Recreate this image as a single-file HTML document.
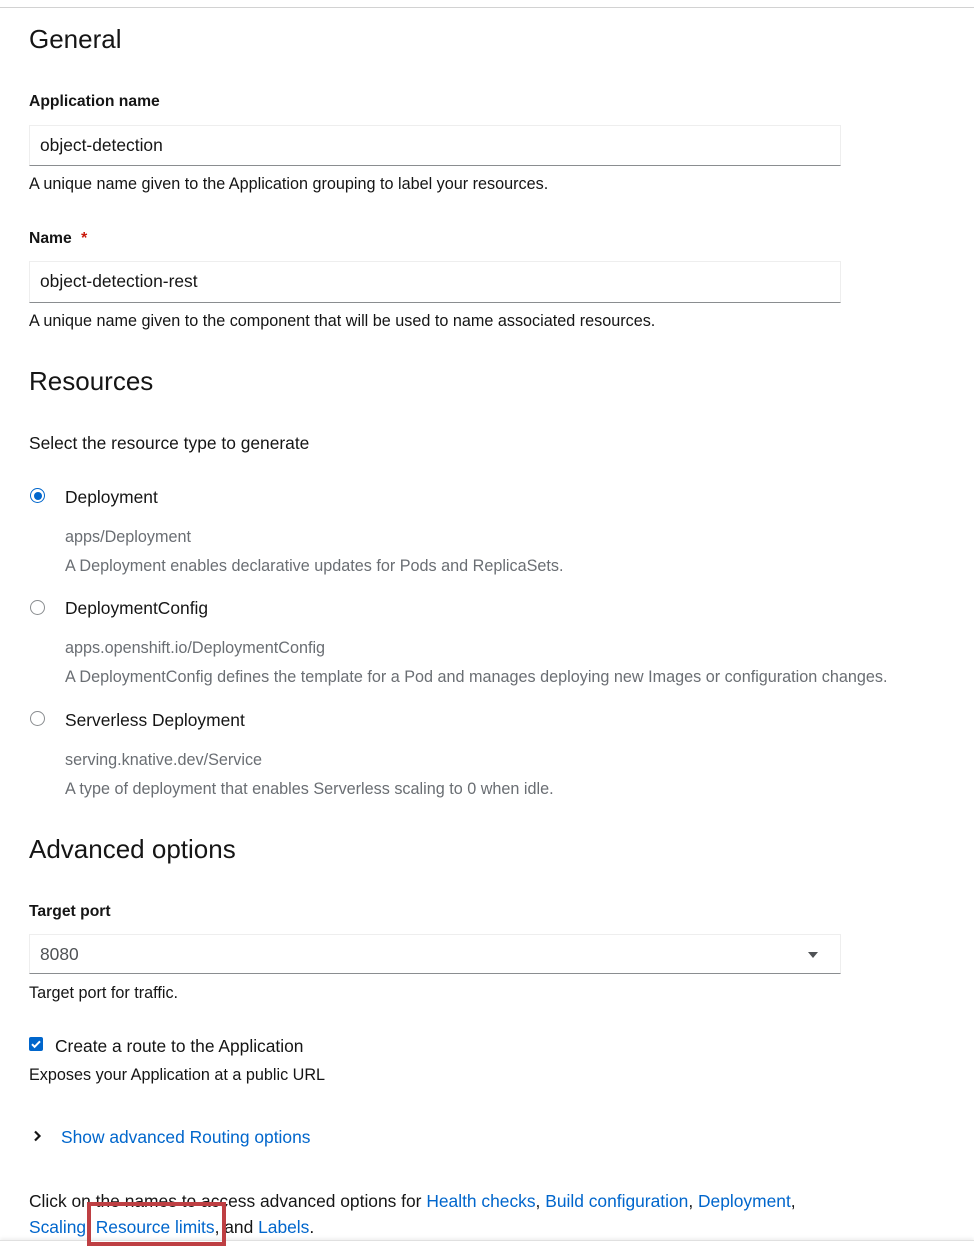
<!DOCTYPE html>
<html><head><meta charset="utf-8"><style>
body{margin:0;width:974px;height:1258px;background:#fff;font-family:"Liberation Sans",sans-serif;color:#151515;position:relative;overflow:hidden}
.a{position:absolute;white-space:nowrap}
h2{position:absolute;margin:0;font-weight:400;font-size:26px;left:29px}
.lbl{font-weight:bold;font-size:15.7px;left:29px}
.inp{position:absolute;left:29px;width:812px;height:39px;border:1px solid #eee;border-bottom:1px solid #8a8d90;box-sizing:border-box;font-size:17.4px;padding:9px 10px}
.help{font-size:16.2px;left:29px}
.rad{position:absolute;left:30px;width:15px;height:15px;border:1px solid #8a8d90;border-radius:50%;box-sizing:border-box}
.rl{font-size:17.4px;left:65px}
.g{font-size:16.2px;color:#6a6e73;left:65px}
a{color:#0066cc;text-decoration:none}
</style></head><body>
<div style="position:absolute;left:0;top:7px;width:974px;height:1px;background:#d2d2d2"></div>
<h2 style="top:24px">General</h2>
<div class="a lbl" style="top:93px">Application name</div>
<div class="inp" style="top:125px;height:41px">object-detection</div>
<div class="a help" style="top:175px">A unique name given to the Application grouping to label your resources.</div>
<div class="a lbl" style="top:230px">Name <span style="color:#c9190b;margin-left:5px">*</span></div>
<div class="inp" style="top:261px;height:42px">object-detection-rest</div>
<div class="a help" style="top:312px">A unique name given to the component that will be used to name associated resources.</div>
<h2 style="top:366px">Resources</h2>
<div class="a" style="left:29px;top:433px;font-size:17.4px">Select the resource type to generate</div>
<div class="rad" style="top:488px;border-color:#0066cc"><div style="position:absolute;left:2.5px;top:2.5px;width:8px;height:8px;border-radius:50%;background:#0066cc"></div></div>
<div class="a rl" style="top:487px">Deployment</div>
<div class="a g" style="top:528px">apps/Deployment</div>
<div class="a g" style="top:557px">A Deployment enables declarative updates for Pods and ReplicaSets.</div>
<div class="rad" style="top:600px"></div>
<div class="a rl" style="top:598px">DeploymentConfig</div>
<div class="a g" style="top:639px">apps.openshift.io/DeploymentConfig</div>
<div class="a g" style="top:668px">A DeploymentConfig defines the template for a Pod and manages deploying new Images or configuration changes.</div>
<div class="rad" style="top:711px"></div>
<div class="a rl" style="top:710px">Serverless Deployment</div>
<div class="a g" style="top:751px">serving.knative.dev/Service</div>
<div class="a g" style="top:780px">A type of deployment that enables Serverless scaling to 0 when idle.</div>
<h2 style="top:834px">Advanced options</h2>
<div class="a lbl" style="top:903px">Target port</div>
<div class="inp" style="top:934px;height:40px;color:#4f5255">8080<span style="position:absolute;right:22px;top:17px;width:0;height:0;border-left:5px solid transparent;border-right:5px solid transparent;border-top:6px solid #4f5255"></span></div>
<div class="a help" style="top:984px">Target port for traffic.</div>
<div style="position:absolute;left:29px;top:1037px;width:14px;height:14px;background:#0066cc;border-radius:2px"><svg width="14" height="14" viewBox="0 0 14 14" style="position:absolute;left:0;top:0"><path d="M3 7.2l2.6 2.6L11 4.3" stroke="#fff" stroke-width="2" fill="none"/></svg></div>
<div class="a" style="left:55px;top:1036px;font-size:17.4px">Create a route to the Application</div>
<div class="a help" style="top:1066px">Exposes your Application at a public URL</div>
<svg class="a" style="left:33px;top:1130px" width="10" height="12" viewBox="0 0 10 12"><path d="M2 1.5l4.5 4.5L2 10.5" stroke="#151515" stroke-width="2.2" fill="none"/></svg>
<div class="a" style="left:61px;top:1127px;font-size:17.4px"><a>Show advanced Routing options</a></div>
<div class="a" style="left:29px;top:1191px;font-size:17.4px">Click on the names to access advanced options for <a>Health checks</a>, <a>Build configuration</a>, <a>Deployment</a>,</div>
<div class="a" style="left:29px;top:1217px;font-size:17.4px"><a>Scaling</a>, <a>Resource limits</a>, and <a>Labels</a>.</div>
<div style="position:absolute;left:0;top:1240px;width:974px;height:18px;background:#fff;border-top:1px solid #e0e0e0;box-shadow:0 -2px 3px rgba(0,0,0,.06)"></div>
<div style="position:absolute;left:87px;top:1202px;width:139px;height:44px;border:4px solid #be3f43;box-sizing:border-box"></div>
</body></html>
